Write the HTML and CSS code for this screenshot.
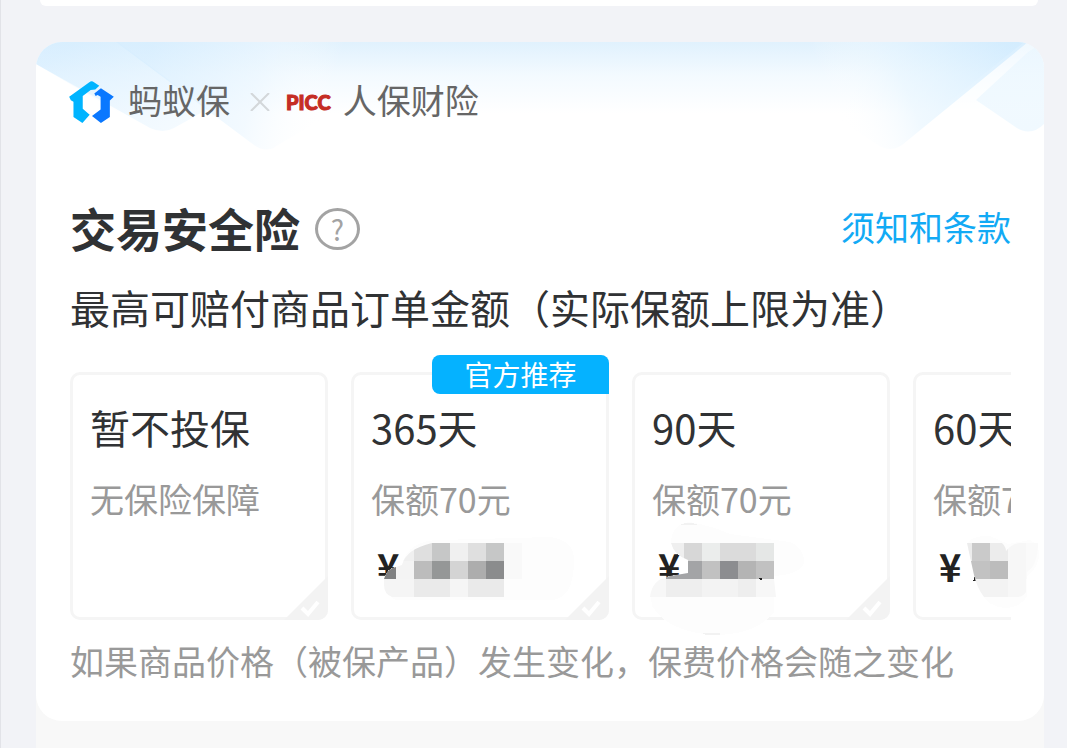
FILE: index.html
```html
<!doctype html>
<html lang="zh-CN">
  <head>
    <meta charset="UTF-8" />
    <meta name="viewport" content="width=device-width, initial-scale=1" />
    <title>交易安全险</title>
    <link rel="stylesheet" href="styles.css">
  </head>
  <body>
    <div class="previous-card"></div>
    <main class="card">
      <svg class="card-bg" viewBox="0 0 1008 110" preserveAspectRatio="none" aria-hidden="true">
        <defs>
          <linearGradient id="sky" x1="0" y1="0" x2="0" y2="1">
            <stop offset="0" stop-color="#e0f1fd" />
            <stop offset="0.3" stop-color="#f3faff" />
            <stop offset="0.65" stop-color="#fff" />
          </linearGradient>
          <linearGradient id="fold" x1="0" y1="0" x2="0" y2="1">
            <stop offset="0" stop-color="#e6f5ff" stop-opacity="0.5" />
            <stop offset="1" stop-color="#e6f5ff" stop-opacity="0.6" />
          </linearGradient>
          <linearGradient id="fold-left" gradientUnits="userSpaceOnUse" x1="40" y1="0" x2="130" y2="130">
            <stop offset="0" stop-color="#d3ecff" stop-opacity="0.6" />
            <stop offset="0.85" stop-color="#eef8ff" stop-opacity="0.6" />
          </linearGradient>
          <linearGradient id="fold-middle" gradientUnits="userSpaceOnUse" x1="110" y1="20" x2="290" y2="70">
            <stop offset="0" stop-color="#d3ecff" stop-opacity="0.6" />
            <stop offset="0.6" stop-color="#eaf6ff" stop-opacity="0.6" />
            <stop offset="1" stop-color="#fff" stop-opacity="0" />
          </linearGradient>
          <linearGradient id="fold-right" gradientUnits="userSpaceOnUse" x1="970" y1="0" x2="800" y2="70">
            <stop offset="0" stop-color="#cbe9ff" stop-opacity="0.6" />
            <stop offset="0.6" stop-color="#e6f5ff" stop-opacity="0.6" />
            <stop offset="1" stop-color="#fff" stop-opacity="0" />
          </linearGradient>
        </defs>
        <path fill="url(#sky)" d="M0 0H1008V110H150L0 22Z" />
        <path fill="url(#fold-left)" d="M0 0H82L172 67L138 86Q127 92 114 86L0 22Z" />
        <path fill="url(#fold-middle)" d="M80 0H420L242 103Q231 112 218 103Z" />
        <path fill="#fff" fill-opacity="0.5" d="M988 0H1008V110H850Z" />
        <path fill="url(#fold-right)" d="M700 0H992L866 103Q854 111 842 103L760 50Z" />
        <path fill="url(#fold)" d="M1008 0V82Q994 96 978 84L940 58L992 10Z" />
      </svg>
      <div class="brands">
        <svg class="ant-logo" viewBox="57 32 135 127" aria-hidden="true">
          <path fill="#00b4ff" d="M57 80L118 36Q125 30 132 36L148 46L136 58L122 59L98 77V116L119 134L97 159L70 141V95L62 90Z" />
          <path fill="#0a78ff" d="M133 70L153 54L192 80L180 91V141L153 159L126 138L152 118V80L143 74L137 77Z" />
        </svg>
        <span class="brand-name">蚂蚁保</span>
        <svg class="times" viewBox="0 0 20 18" aria-hidden="true">
          <path d="M1 0L19 18M19 0L1 18" />
        </svg>
        <span class="picc">PICC</span>
        <span class="brand-name">人保财险</span>
      </div>
      <div class="title-row">
        <h1 class="title">交易安全险</h1>
        <button class="help" type="button" aria-label="帮助">?</button>
        <a class="terms" href="#">须知和条款</a>
      </div>
      <p class="subtitle">最高可赔付商品订单金额（实际保额上限为准）</p>
      <div class="plans-wrap">
        <div class="plans">
          <label class="plan">
            <input class="plan-input" type="radio" name="plan" />
            <span class="plan-name">暂不投保</span>
            <span class="plan-cover">无保险保障</span>
            <svg class="plan-check" viewBox="0 0 44 44" aria-hidden="true">
              <path class="corner" d="M0 44L44 0V44Z" />
              <path class="tick" d="M18 32L24 38L34 26" />
            </svg>
          </label>
          <label class="plan">
            <input class="plan-input" type="radio" name="plan" />
            <span class="plan-badge">官方推荐</span>
            <span class="plan-name">365天</span>
            <span class="plan-cover">保额70元</span>
            <span class="plan-price">¥</span>
            <svg class="plan-check" viewBox="0 0 44 44" aria-hidden="true">
              <path class="corner" d="M0 44L44 0V44Z" />
              <path class="tick" d="M18 32L24 38L34 26" />
            </svg>
          </label>
          <label class="plan">
            <input class="plan-input" type="radio" name="plan" />
            <span class="plan-name">90天</span>
            <span class="plan-cover">保额70元</span>
            <span class="plan-price">¥</span>
            <svg class="plan-check" viewBox="0 0 44 44" aria-hidden="true">
              <path class="corner" d="M0 44L44 0V44Z" />
              <path class="tick" d="M18 32L24 38L34 26" />
            </svg>
          </label>
          <label class="plan">
            <input class="plan-input" type="radio" name="plan" />
            <span class="plan-name">60天</span>
            <span class="plan-cover">保额70元</span>
            <span class="plan-price">¥</span>
          </label>
        </div>
        <!-- blurred-out prices -->
        <svg class="mosaic" viewBox="351 520 690 120" shape-rendering="crispEdges" aria-hidden="true">
          <defs>
            <clipPath id="blob-365">
              <path d="M384 579Q387 568 396 567L402 565Q406 549 432 543H560V597H392Q384 594 384 585Z" />
            </clipPath>
            <clipPath id="blob-90">
              <path d="M671 543H774V579L776 597H650Q652 579 670 576L688 573V560Q674 555 671 543Z" />
            </clipPath>
            <clipPath id="blob-60">
              <path d="M967 543H1002Q1006 547 1006 551Q1012 543 1020 543H1038Q1038 565 1027 572V590Q1024 597 1018 597H984Q977 588 974 575Z" />
            </clipPath>
          </defs>
          <path fill="#fdfdfd" d="M384 579Q387 568 396 567L402 565Q408 540 440 540L550 537Q574 540 574 560Q574 600 550 600H396Q384 594 384 579Z" />
          <g clip-path="url(#blob-365)">
            <path fill="#f0f0f0" d="M396 543h18v18h-18zM450 543h18v18h-18z" />
            <path fill="#dfdfdf" d="M414 543h18v18h-18zM468 543h18v18h-18z" />
            <path fill="#c6c7c7" d="M432 543h18v18h-18zM486 543h18v18h-18z" />
            <path fill="#f9f9f9" d="M504 543h18v36h-18z" />
            <path fill="#808182" d="M378 561h18v18h-18z" />
            <path fill="#f4f4f4" d="M396 561h18v18h-18z" />
            <path fill="#bcbcbc" d="M414 561h18v18h-18z" />
            <path fill="#959797" d="M432 561h18v18h-18z" />
            <path fill="#d4d4d4" d="M450 561h18v18h-18z" />
            <path fill="#adadad" d="M468 561h18v18h-18z" />
            <path fill="#8b8c8d" d="M486 561h18v18h-18z" />
            <path fill="#f5f5f5" d="M378 579h36v18h-36zM450 579h18v18h-18z" />
            <path fill="#eaeaea" d="M414 579h36v18h-36zM468 579h36v18h-36z" />
          </g>
          <path fill="#fdfdfd" d="M671 543Q671 524 690 522Q712 526 730 534L790 542Q804 548 804 562Q802 574 774 576V612Q756 635 714 635Q668 632 652 606Q648 580 670 576L688 573V560Q674 555 671 543Z" />
          <path fill="#f2f2f2" d="M680 525Q689 520 698 525ZM702 633H720V635H706Z" />
          <g clip-path="url(#blob-90)">
            <path fill="#efefef" d="M666 543h18v18h-18z" />
            <path fill="#d7d7d7" d="M684 543h18v18h-18z" />
            <path fill="#ebedec" d="M702 543h18v18h-18z" />
            <path fill="#dbdbdb" d="M720 543h36v18h-36z" />
            <path fill="#e5e7e6" d="M756 543h18v18h-18z" />
            <path fill="#a3a4a6" d="M666 561h36v18h-36z" />
            <path fill="#c1c1c1" d="M702 561h18v18h-18zM756 561h18v18h-18z" />
            <path fill="#8c8d90" d="M720 561h18v18h-18z" />
            <path fill="#b4b4b4" d="M738 561h18v18h-18z" />
            <path fill="#f7f7f7" d="M648 579h18v18h-18zM756 579h20v18h-20z" />
            <path fill="#eee" d="M666 579h36v18h-36zM738 579h18v18h-18z" />
            <path fill="#f3f3f3" d="M702 579h36v18h-36z" />
          </g>
          <path fill="#222" d="M759 578H762V580H760ZM973 581L976 574L978 581Z" />
          <path fill="#fdfdfd" d="M967 543Q974 535 990 536L1008 544L1030 540Q1041 546 1039 558Q1036 570 1027 576V596Q1020 608 1004 608Q988 606 982 594L974 575Z" />
          <g clip-path="url(#blob-60)">
            <path fill="#ececec" d="M966 543h6v18h-6zM990 543h18v18h-18z" />
            <path fill="#cacaca" d="M972 543h18v18h-18z" />
            <path fill="#c2c2c2" d="M966 561h24v18h-24z" />
            <path fill="#bcbcbc" d="M990 561h18v18h-18z" />
            <path fill="#f3f3f3" d="M972 579h36v18h-36z" />
            <path fill="#f7f7f7" d="M1008 543h18v54h-18z" />
            <path fill="#fafafa" d="M1026 543h14v36h-14z" />
          </g>
        </svg>
      </div>
      <p class="note">如果商品价格（被保产品）发生变化，保费价格会随之变化</p>
    </main>
    <div class="page-bottom"></div>
  </body>
</html>
```
FILE: styles.css
```css
html,
body {
  height: 100%;
}
body {
  background: #f2f3f7;
  border-left: 1px solid #e2e3e8;
  box-sizing: border-box;
  color: #303234;
  display: flex;
  flex-direction: column;
  font-family: "Noto Sans CJK SC", sans-serif;
  margin: 0;
  overflow: hidden;
  padding: 0 23px 0 35px;
}
h1,
p {
  margin: 0;
}
.previous-card {
  background: #fff;
  border-radius: 0 0 8px 8px;
  flex-shrink: 0;
  height: 6px;
  margin: 0 6px 36px 4px;
}
.card {
  background: #fff;
  border-radius: 26px;
  padding: 35px 33px 36px 34px;
  position: relative;
  z-index: 1;
}
.card-bg {
  border-radius: 26px 26px 0 0;
  height: 110px;
  left: 0;
  position: absolute;
  top: 0;
  width: 100%;
}
.page-bottom {
  background: #f8f8f8;
  flex-grow: 1;
  margin-top: -26px;
}
.brands {
  align-items: center;
  display: flex;
  height: 50px;
  position: relative;
}
.ant-logo {
  height: 42px;
  margin: 0 14px 0 -1px;
  width: 45px;
}
.brand-name,
.terms,
.plan-cover,
.note {
  font-size: 34px;
  line-height: 48px;
}
.brand-name,
.terms {
  padding-bottom: 4px;
}
.brand-name {
  color: #666;
}
.times {
  fill: none;
  height: 18px;
  margin: 0 16px 0 20px;
  stroke: #d3d7da;
  stroke-width: 2;
  width: 20px;
}
.picc {
  -webkit-text-stroke: 1px #c52d24;
  color: #c52d24;
  font-family: Lato, sans-serif;
  font-size: 20px;
  font-weight: 900;
  margin-right: 12px;
}
.title-row {
  align-items: center;
  display: flex;
  margin-top: 72px;
}
.title {
  font-size: 46px;
  font-weight: 700;
  line-height: 56px;
  padding-bottom: 4px;
}
.help {
  background: none;
  border: 3px solid #a3a3a3;
  border-radius: 50%;
  color: #a3a3a3;
  font-family: inherit;
  font-size: 28px;
  font-weight: 400;
  height: 42px;
  line-height: 36px;
  margin-left: 15px;
  padding: 0;
  width: 45px;
}
.terms {
  color: #12aaf5;
  margin-left: auto;
  text-decoration: none;
}
.subtitle {
  font-size: 40px;
  line-height: 48px;
  margin-top: 24px;
}
.plans-wrap {
  margin-top: 24px;
  position: relative;
}
.plans {
  display: flex;
  gap: 23px;
  overflow: hidden;
  padding-top: 17px;
}
.plan {
  border: 3px solid #f5f5f5;
  border-radius: 10px;
  box-sizing: border-box;
  display: flex;
  flex-direction: column;
  flex-shrink: 0;
  height: 248px;
  padding: 28px 17px 0;
  position: relative;
  width: 258px;
}
.plan-input {
  appearance: none;
  inset: 0;
  margin: 0;
  position: absolute;
}
.plan-badge {
  background: #05b2ff;
  border-radius: 8px 8px 0 8px;
  color: #fff;
  font-size: 28px;
  line-height: 39px;
  position: absolute;
  right: -3px;
  text-align: center;
  top: -20px;
  width: 177px;
}
.plan-name {
  font-size: 40px;
  line-height: 48px;
}
.plan-cover {
  color: #999;
  margin-top: 24px;
}
.plan-price {
  color: #222;
  font-size: 38px;
  font-weight: 700;
  line-height: 40px;
  margin: 23px 0 0 6px;
}
.plan-check {
  border-radius: 0 0 10px 0;
  bottom: -3px;
  height: 44px;
  position: absolute;
  right: -3px;
  width: 44px;
}
.corner {
  fill: #f3f3f3;
}
.tick {
  fill: none;
  stroke: #fff;
  stroke-width: 4;
}
.mosaic {
  height: 120px;
  left: 281px;
  pointer-events: none;
  position: absolute;
  top: 165px;
  width: 690px;
}
.note {
  color: #999;
  margin-top: 17px;
  white-space: nowrap;
}
```
